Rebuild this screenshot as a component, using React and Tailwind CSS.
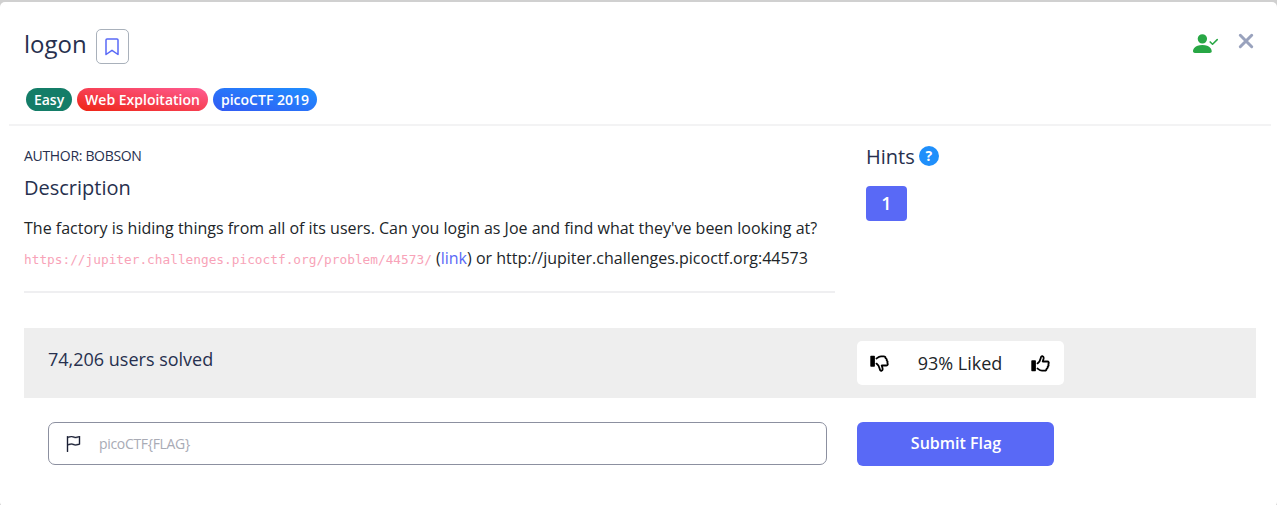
import { BsFlag, BsPersonCheckFill } from "react-icons/bs";

function Thumb({ className }) {
  return (
    <svg className={`h-[17px] w-[19px] ${className}`} viewBox="0 0 19 17" fill="none" aria-hidden="true">
      <rect x="0.3" y="5.3" width="4.6" height="10.9" rx="0.7" fill="#000" />
      <path
        d="M6.5 8.4C8.6 6.9 9.3 5.2 9.7 3.2C10 1.6 10.6 1 11.4 1.2C12.5 1.5 12.8 2.7 12.5 3.9L11.7 6.5H16.3C17.8 6.5 18.2 8 17.3 9C17.8 10 17.5 11 16.7 11.5C17 12.5 16.5 13.4 15.6 13.8C15.6 15 14.8 15.7 13.7 15.7H11C9.2 15.7 8 14.7 6.5 13.5"
        stroke="#000"
        strokeWidth="1.8"
        strokeLinecap="round"
        strokeLinejoin="round"
      />
    </svg>
  );
}

function Tag({ className, children }) {
  return (
    <span className={`flex h-[23px] items-center rounded-full text-sm leading-none font-semibold text-white ${className}`}>
      {children}
    </span>
  );
}

function Header() {
  return (
    <header className="mr-[6px] ml-[9px] flex h-[124px] justify-between border-b-2 border-[#f3f3f4] pr-[17px] pl-[15px]">
      <div>
        <div className="flex gap-[9px] pt-[27px]">
          <h1 className="-mt-0.5 text-2xl leading-[34px] text-[#27304e]">logon</h1>
          <button className="flex h-[35px] w-[33px] items-center justify-center rounded-[5px] border border-[#a9b1bb]" aria-label="Bookmark">
            <svg className="h-[18px] w-[14px]" viewBox="0 0 14 18" fill="none" stroke="#5969f6" strokeWidth="1.5" strokeLinejoin="round">
              <path d="M1 16.5V2a1 1 0 0 1 1-1h10a1 1 0 0 1 1 1v14.5l-6-4.2z" />
            </svg>
          </button>
        </div>
        <div className="mt-6 flex gap-[5px] pl-0.5">
          <Tag className="w-[46px] justify-center bg-[#147d68]">Easy</Tag>
          <Tag className="w-[131px] justify-center bg-[linear-gradient(to_top_right,#ee2414,#ff5c93)]">Web Exploitation</Tag>
          <Tag className="w-[104px] justify-center bg-[linear-gradient(to_top_right,#335af3,#1e8fff)]">picoCTF 2019</Tag>
        </div>
      </div>
      <div className="flex gap-5 pt-[28px]">
        <BsPersonCheckFill className="mt-px size-[25px] text-[#28a745]" />
        <svg className="mt-[3px] size-4" viewBox="0 0 16 16" fill="none" stroke="#99a2bd" strokeWidth="3" strokeLinecap="round" aria-label="Close">
          <path d="M2.3 2.3l11.4 11.4M13.7 2.3L2.3 13.7" />
        </svg>
      </div>
    </header>
  );
}

function Details() {
  return (
    <section className="flex h-[202px] pl-6">
      <div className="h-[167px] w-[811px] border-b-2 border-[#efeff1] pt-5">
        <p className="text-sm leading-5 tracking-[-0.32px] text-[#27304e]">AUTHOR: BOBSON</p>
        <h2 className="mt-2 text-xl leading-7 text-[#27304e]">Description</h2>
        <p className="mt-[11px] text-base leading-[30px] whitespace-nowrap text-[#212529]">
          The factory is hiding things from all of its users. Can you login as Joe and find what they&apos;ve been looking at?
          <br />
          <code className="font-['DejaVu_Sans_Mono',monospace] text-[12.79px] text-[#f8a3b8]">https://jupiter.challenges.picoctf.org/problem/44573/</code>{" "}
          (<a className="text-[#5969f6]">link</a>) or http://jupiter.challenges.picoctf.org:44573
        </p>
      </div>
      <aside className="pt-[15px] pl-[31px]">
        <div className="flex items-center gap-1">
          <h2 className="pt-0.5 text-xl leading-7 text-[#27304e]">Hints</h2>
          <span className="flex size-5 items-center justify-center rounded-full bg-[#1f8ffb] text-sm leading-none font-bold text-white">?</span>
        </div>
        <button className="mt-[15px] flex h-[35px] w-[41px] items-center justify-center rounded-[4px] bg-[#5969f6] pb-0.5 text-lg font-semibold text-white">1</button>
      </aside>
    </section>
  );
}

function Solves() {
  return (
    <section className="mr-[21px] ml-6 flex h-[70px] bg-[#eee]">
      <p className="w-[833px] pt-[17px] pl-6 text-lg leading-7 text-[#27304e]">74,206 users solved</p>
      <div className="mt-[13px] flex h-11 w-[207px] items-center justify-between rounded-[5px] bg-white pr-[14px] pl-[13px] text-lg text-[#212529]">
        <Thumb className="-scale-y-100" />
        <span>93% Liked</span>
        <Thumb className="" />
      </div>
    </section>
  );
}

function FlagForm() {
  return (
    <form className="flex gap-[30px] pt-6 pl-12">
      <div className="flex h-[43px] w-[779px] items-center gap-[18px] rounded-[7px] border border-[#8c90a0] pl-[16px]">
        <BsFlag className="size-4 text-[#1b2036]" stroke="currentColor" strokeWidth="0.4" />
        <span className="text-sm tracking-[-0.32px] text-[#a9abb5]">picoCTF&#123;FLAG&#125;</span>
      </div>
      <button type="button" className="h-11 w-[197px] rounded-[6px] bg-[#5969f6] pb-0.5 pl-px text-base font-semibold text-white">Submit Flag</button>
    </form>
  );
}

export default function App() {
  return (
    <div className="h-[505px] overflow-hidden bg-[#d0d0d0] pt-[2px] font-['Open_Sans',sans-serif]">
      <main className="h-[505px] rounded-[5px] bg-white">
        <Header />
        <Details />
        <Solves />
        <FlagForm />
      </main>
    </div>
  );
}
